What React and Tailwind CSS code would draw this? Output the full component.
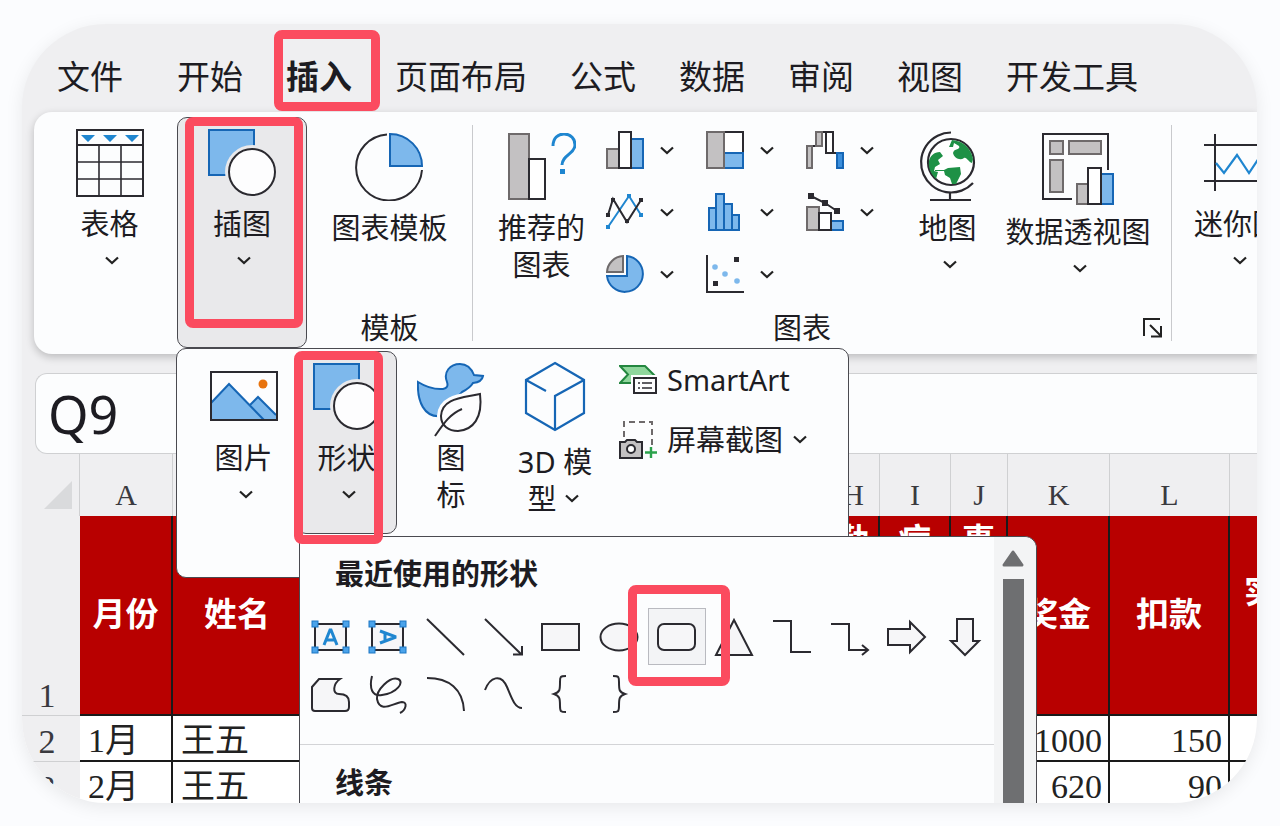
const RED_BOX =
  "pointer-events-none absolute z-10 rounded-lg border-[9px] border-[#fb4b5f]";
const DARK = "#2b2a30";
const BLUE = "#7db8ec";
const BLUE_LINE = "#1666b5";
const GRAY = "#c3c1c2";
const GRAY_LINE = "#6e6a6b";

const Chevron = () => (
  <svg width="14" height="9" viewBox="0 0 14 9" fill="none" stroke="#222" strokeWidth="2.2">
    <path d="M1 1.5L7 7L13 1.5" />
  </svg>
);

const TableIcon = () => (
  <svg width="68" height="68" viewBox="0 0 68 68" fill="none" stroke={DARK} strokeWidth="1.6">
    <rect x="1" y="1" width="66" height="66" strokeWidth="2" />
    <path d="M1 16H67" strokeWidth="2" />
    <path d="M1 33H67M1 50H67M23 16V67M45 16V67" />
    <path d="M5 6H19L12 13ZM27 6H41L34 13ZM49 6H63L56 13Z" fill="#1f86d0" stroke="none" />
  </svg>
);

const ShapesIcon = () => (
  <svg width="68" height="68" viewBox="0 0 68 68">
    <rect x="1" y="1" width="45" height="45" fill={BLUE} stroke={BLUE_LINE} strokeWidth="2" />
    <circle cx="44" cy="43" r="27" fill="#e9e9eb" />
    <circle cx="44" cy="43" r="23" fill="#fdfdfe" stroke={DARK} strokeWidth="2" />
  </svg>
);

const PieTemplateIcon = () => (
  <svg width="68" height="68" viewBox="0 0 68 68" fill="none">
    <path d="M32 1.5A33 33 0 1 0 67 37" stroke={DARK} strokeWidth="2" />
    <path d="M35 1A32 32 0 0 1 67 33H35Z" fill={BLUE} stroke={BLUE_LINE} strokeWidth="2" />
  </svg>
);

const RecommendIcon = () => (
  <svg width="68" height="68" viewBox="0 0 68 68" fill="none" strokeWidth="2">
    <rect x="1" y="1" width="20" height="65" fill={GRAY} stroke={GRAY_LINE} />
    <rect x="21" y="26" width="16" height="40" fill="#fff" stroke={DARK} />
    <path d="M45 13C45 5 50 1 56 1C63 1 67 6 67 12C67 21 54 22 54 32" stroke="#1f86d0" strokeWidth="3" />
    <rect x="52" y="36" width="5" height="5" fill="#1f86d0" />
  </svg>
);

const GlobeIcon = () => (
  <svg width="60" height="68" viewBox="0 2 60 68" className="overflow-visible" fill="none" stroke={DARK} strokeWidth="2.2">
    <path d="M33 1.5A30 30 0 1 0 55 52M32 61V69M12 69H53" />
    <circle cx="33" cy="31" r="23" fill="#fff" />
    <g fill="#1e9146" stroke="none">
      <path d="M11 30C12 25 16 21 22 21L25 25L20 29L22 33L17 36L16 40L20 41L18 48C13 43 10 37 11 30Z" />
      <path d="M34 9C45 10 53 17 55 28L54 32C50 31 49 26 46 27C42 30 36 27 35 22C36 17 43 19 41 15L36 12L35 16H31Z" />
      <path d="M30 37L42 36L43 43L38 53L34 53L32 47L27 44L26 40L17 40V39L26 39Z" />
    </g>
  </svg>
);

const PivotChartIcon = () => (
  <svg width="72" height="72" viewBox="0 0 72 72" fill="none" stroke={DARK} strokeWidth="2">
    <path d="M30 66H1V1H66V37" />
    <g fill={GRAY} stroke={GRAY_LINE}>
      <rect x="8" y="8" width="13" height="13" />
      <rect x="27" y="8" width="32" height="13" />
      <rect x="8" y="27" width="13" height="32" />
      <rect x="35" y="51" width="11" height="20" />
    </g>
    <rect x="59" y="41" width="12" height="30" fill={BLUE} stroke={BLUE_LINE} />
    <rect x="46" y="35" width="13" height="36" fill="#fff" />
  </svg>
);

const SparklineIcon = () => (
  <svg width="68" height="68" viewBox="0 -5 68 68" fill="none" stroke={DARK} strokeWidth="2">
    <path d="M11 0V57M58 0V57M0 11H68M0 47H68" />
    <path d="M12 29L20 39L33 21L45 39L57 21" stroke="#1f86d0" strokeWidth="2.2" />
  </svg>
);

const PictureIcon = () => (
  <svg width="68" height="68" viewBox="0 0 68 68" strokeWidth="2">
    <rect x="1" y="9" width="66" height="48" fill="#fdfdfe" />
    <path d="M1 57V40L19 21L40 42L48 34L66 52V57Z" fill={BLUE} />
    <path d="M1 40L19 21L54 57M40 42L48 34L66 52" fill="none" stroke={BLUE_LINE} />
    <rect x="1" y="9" width="66" height="48" fill="none" stroke={DARK} />
    <circle cx="53" cy="21" r="4.5" fill="#e8730e" />
  </svg>
);

const DuckLeafIcon = () => (
  <svg width="68" height="74" viewBox="0 0 68 74" fill="none" strokeWidth="2">
    <path
      d="M1 19Q14 27 26 26Q32 25 30 19C26 9 33 1 43 1C51 1 55 7 57 12L66 13Q65 19 56 20Q53 25 45 29L24 53C7 55 0 38 1 19Z"
      fill={BLUE}
      stroke={BLUE_LINE}
    />
    <path d="M63 31C45 35 25 35 24 53C24 63 32 68 41 68C56 67 66 55 63 31Z" fill="#fdfdfe" stroke="#fdfdfe" strokeWidth="8" />
    <path d="M63 31C45 35 25 35 24 53C24 63 32 68 41 68C56 67 66 55 63 31Z" fill="#fdfdfe" stroke={DARK} />
    <path d="M45 46C33 51 27 60 18 73" stroke={DARK} />
  </svg>
);

const CubeIcon = () => (
  <svg width="60" height="72" viewBox="0 1 60 72" className="overflow-visible" fill="none" stroke={BLUE_LINE} strokeWidth="2.2">
    <path d="M30 1L59 18V51L30 68L1 51V18Z" />
    <path d="M1 18L21 29M59 18L30 34V68" />
  </svg>
);

const SmartArtIcon = () => (
  <svg width="38" height="38" viewBox="0 -5 38 38" fill="none" strokeWidth="2">
    <path d="M1 1H26L36 11V18H1L9 9.500Z" fill="#8fd69c" stroke="#23863f" />
    <rect x="12" y="10" width="28" height="20" fill="#fdfdfe" />
    <rect x="15" y="13" width="22" height="15" fill="#fdfdfe" stroke={DARK} />
    <path d="M19 18H21M19 23H21M23 18H33M23 23H33" stroke={DARK} strokeWidth="1.6" />
  </svg>
);

const ScreenshotIcon = () => (
  <svg width="38" height="38" viewBox="0 -1 38 38" className="overflow-visible" fill="none" strokeWidth="2">
    <path d="M5 16V1H33V25" stroke={GRAY_LINE} strokeDasharray="6 4" />
    <path d="M1 21H6L8 19H16L18 21H23V37H1Z" fill={GRAY} stroke={DARK} />
    <circle cx="12" cy="28" r="4" fill="#fff" stroke={DARK} />
    <path d="M32 26V37M26 31.500H38" stroke="#2ba24c" strokeWidth="2.4" />
  </svg>
);

const CHARTS = [
  {
    name: "柱形图",
    art: (
      <>
        <rect x="1" y="18" width="12" height="19" fill={GRAY} stroke={GRAY_LINE} />
        <rect x="25" y="8" width="12" height="29" fill={BLUE} stroke={BLUE_LINE} />
        <rect x="13" y="1" width="12" height="36" fill="#fff" stroke={DARK} />
      </>
    ),
  },
  {
    name: "层次结构图",
    art: (
      <>
        <rect x="18" y="1" width="19" height="21" fill="#fff" stroke={DARK} />
        <rect x="18" y="22" width="19" height="15" fill={BLUE} stroke={BLUE_LINE} />
        <rect x="1" y="1" width="17" height="36" fill={GRAY} stroke={GRAY_LINE} />
      </>
    ),
  },
  {
    name: "瀑布图",
    art: (
      <>
        <path d="M6 15H10M16 1H19M27 22H31" stroke={DARK} />
        <rect x="1" y="15" width="5" height="22" fill={GRAY} stroke={GRAY_LINE} />
        <rect x="10" y="1" width="6" height="14" fill={GRAY} stroke={GRAY_LINE} />
        <rect x="20" y="1" width="7" height="21" fill="#fff" stroke={DARK} />
        <rect x="31" y="22" width="6" height="15" fill="#3c8fdc" stroke={BLUE_LINE} />
      </>
    ),
  },
  {
    name: "折线图",
    art: (
      <>
        <path d="M2 34L23 3L35 22" stroke="#1f86d0" />
        <path d="M2 22L7 6L21 29L35 7" stroke={DARK} />
        <path d="M0 32h4v4H0zM21 1h4v4h-4zM33 20h4v4h-4z" fill="#1f86d0" stroke="none" />
        <path d="M0 20h4v4H0zM5 5h4v4H5zM19 26h4v4h-4zM33 5h4v4h-4z" fill={DARK} stroke="none" />
      </>
    ),
  },
  {
    name: "统计图",
    art: (
      <g fill={BLUE} stroke={BLUE_LINE}>
        <rect x="3" y="15" width="7" height="22" />
        <rect x="18" y="11" width="8" height="26" />
        <rect x="26" y="22" width="7" height="15" />
        <rect x="10" y="1" width="8" height="36" />
      </g>
    ),
  },
  {
    name: "组合图",
    art: (
      <>
        <path d="M5 3L19 10L31 18" stroke={DARK} />
        <path d="M2 0h6v6H2zM16 7h6v6h-6zM28 15h6v6h-6z" fill={DARK} stroke="none" />
        <rect x="1" y="14" width="12" height="23" fill={GRAY} stroke={GRAY_LINE} />
        <rect x="25" y="28" width="12" height="9" fill={BLUE} stroke={BLUE_LINE} />
        <rect x="13" y="20" width="12" height="17" fill="#fff" stroke={DARK} />
      </>
    ),
  },
  {
    name: "饼图",
    art: (
      <>
        <path d="M21 1A18 18 0 1 1 1 21H21Z" fill={BLUE} stroke={BLUE_LINE} />
        <path d="M17 1A17 17 0 0 0 1 17H17Z" fill={GRAY} stroke={GRAY_LINE} />
      </>
    ),
  },
  {
    name: "散点图",
    art: (
      <>
        <path d="M1 0V37H38" stroke={DARK} />
        <path d="M28 2h5v5h-5zM7 26h5v5H7z" fill={DARK} stroke="none" />
        <g fill={BLUE} stroke="none">
          <circle cx="9" cy="12" r="2.800" />
          <circle cx="19" cy="19" r="2.800" />
          <circle cx="31" cy="26" r="2.800" />
        </g>
      </>
    ),
  },
];

const CORNERS = (
  <g fill="#4ba3ea" stroke="#1b76c4" strokeWidth="1">
    <rect x="1" y="4" width="6" height="6" />
    <rect x="32" y="4" width="6" height="6" />
    <rect x="1" y="30" width="6" height="6" />
    <rect x="32" y="30" width="6" height="6" />
  </g>
);

const SHAPES = [
  {
    name: "文本框",
    art: (
      <>
        <rect x="4" y="7" width="31" height="26" />
        {CORNERS}
        <path d="M13 28L19 13H20L26 28M15.500 23H23.500" stroke="#1f86d0" strokeWidth="3" />
      </>
    ),
  },
  {
    name: "竖排文本框",
    art: (
      <>
        <rect x="4" y="7" width="31" height="26" />
        {CORNERS}
        <path d="M12 14L27 19.500V20.500L12 26M17 16V24" stroke="#1f86d0" strokeWidth="3" />
      </>
    ),
  },
  { name: "直线", art: <path d="M1 2L38 38" /> },
  { name: "箭头", art: <path d="M1 2L37 37M29 37.500H38V29" /> },
  { name: "矩形", art: <rect x="1" y="7" width="37" height="26" /> },
  { name: "椭圆", art: <ellipse cx="20" cy="20" rx="18.500" ry="13.500" /> },
  { name: "圆角矩形", selected: true, art: <rect x="1" y="7" width="37" height="26" rx="6" /> },
  { name: "三角形", art: <path d="M20 3L38 38H2Z" /> },
  { name: "肘形连接符", art: <path d="M1 4H19V35H39" fill="none" /> },
  { name: "肘形箭头", art: <path d="M1 7H19V33H37M32 28L38 33L32 38" fill="none" /> },
  { name: "右箭头", art: <path d="M1 12H23V5L38 20L23 35V28H1Z" /> },
  { name: "下箭头", art: <path d="M12 2H28V24H34L20 38L6 24H12Z" /> },
  {
    name: "任意多边形",
    art: <path d="M8 5H29C22 10 21 20 28 20C35 20 38 23 38 28V33Q38 37 34 37H4Q1 37 1 34V13Z" />,
  },
  {
    name: "自由曲线",
    art: <path d="M4 2C1 14 4 23 14 21C29 19 37 8 30 5C22 2 8 16 9 25C12 40 25 29 34 28C40 28 38 36 32 39" fill="none" />,
  },
  { name: "弧形", art: <path d="M1 4C23 4 37 15 38 37" fill="none" /> },
  { name: "曲线", art: <path d="M1 16C6 3 17 -1 23 13C28 25 31 34 38 34" fill="none" /> },
  { name: "左大括号", art: <path d="M25 2C19 2 19 3 19 8C19 16 19 18 13 20C19 22 19 25 19 32C19 38 20 38 25 38" fill="none" /> },
  { name: "右大括号", art: <path d="M14 2C20 2 20 3 20 8C20 16 20 18 26 20C20 22 20 25 20 32C20 38 19 38 14 38" fill="none" /> },
];

const TABS = ["文件", "开始", "插入", "页面布局", "公式", "数据", "审阅", "视图", "开发工具"];

const BigButton = ({ icon, label, arrow = false, className = "" }) => (
  <button type="button" className={`flex flex-col items-center ${className}`}>
    {icon}
    <span className="mt-2 whitespace-nowrap">{label}</span>
    {arrow && (
      <span className="flex h-[37px] items-center pl-1">
        <Chevron />
      </span>
    )}
  </button>
);

const ShapesMenu = () => (
  <div className="absolute top-full left-[3px] z-20 mt-px flex h-[300px] w-[738px] rounded-tr-xl border border-[#4a4a50] bg-[#fcfdfe]">
    <div className="flex-1">
      <h2 className="mt-[18px] pl-[35px] font-bold">最近使用的形状</h2>
      <div className="mt-4 ml-0.5 grid grid-cols-12">
        {SHAPES.map((shape) => (
          <button
            key={shape.name}
            type="button"
            aria-label={shape.name}
            className={
              shape.selected
                ? "relative flex h-[57px] items-center justify-center border border-[#b9bac0] bg-[#f3f4f6]"
                : "flex h-[57px] items-center justify-center"
            }
          >
            <svg width="40" height="40" viewBox="0 0 40 40" fill="#f6f6f8" stroke={DARK} strokeWidth="2">
              {shape.art}
            </svg>
            {shape.selected && <span className={`${RED_BOX} -top-6 -right-[25px] -bottom-[22px] -left-[21px]`} />}
          </button>
        ))}
      </div>
      <hr className="mt-[22px] border-[#d3d4d7]" />
      <h2 className="mt-[19px] pl-[35px] font-bold">线条</h2>
    </div>
    <div className="flex w-[42px] flex-col items-center rounded-tr-xl bg-[#f3f4f5] pt-3 pr-1">
      <svg width="22" height="18" viewBox="0 0 22 18">
        <path d="M11 3L20 16H2Z" fill="#6e6f71" stroke="#6e6f71" strokeWidth="3" strokeLinejoin="round" />
      </svg>
      <div className="mt-3 w-[21px] flex-1 bg-[#6e6f71]" />
    </div>
  </div>
);

const IllustrationMenu = () => (
  <div className="absolute top-full -left-px z-20 flex h-[230px] w-[673px] items-start rounded-[10px] border border-[#4a4a50] bg-[#fcfdfe]">
    <BigButton icon={<PictureIcon />} label="图片" arrow className="ml-[14px] w-[105px] pt-[14px]" />
    <div className="relative mt-0.5 h-[184px] w-[101px]">
      <BigButton
        icon={<ShapesIcon />}
        label="形状"
        arrow
        className="h-[183px] w-full rounded-[10px] border border-[#4a4a50] bg-[#e9e9eb] pt-[11px]"
      />
      <span className={`${RED_BOX} top-0 right-[14px] -bottom-[9px] -left-0.5 z-30`} />
      <ShapesMenu />
    </div>
    <button type="button" className="flex w-[108px] flex-col items-center pt-[14px]">
      <span className="h-17">
        <DuckLeafIcon />
      </span>
      <span className="mt-2">
        图
        <br />标
      </span>
    </button>
    <button type="button" className="flex w-[100px] flex-col items-center pt-[14px]">
      <CubeIcon />
      <span className="mt-2 whitespace-nowrap">3D 模</span>
      <span className="flex items-center gap-2 pr-1">
        型
        <Chevron />
      </span>
    </button>
    <div className="ml-[14px] flex flex-col">
      <button type="button" className="flex h-15 items-center gap-[10px]">
        <SmartArtIcon />
        SmartArt
      </button>
      <button type="button" className="flex h-15 items-center gap-[10px]">
        <ScreenshotIcon />
        屏幕截图
        <Chevron />
      </button>
    </div>
  </div>
);

const Ribbon = () => (
  <div className="relative z-10 ml-3 flex h-[242px] rounded-l-[18px] bg-[#fcfdfe] text-[29px] leading-[37px] shadow-[0_3px_8px_rgba(0,0,0,0.22)]">
    <BigButton icon={<TableIcon />} label="表格" arrow className="ml-2 w-[135px] shrink-0 pt-[17px]" />

    <div className="relative mt-[5px] h-[231px] w-[130px] shrink-0">
      <BigButton
        icon={<ShapesIcon />}
        label="插图"
        arrow
        className="h-full w-full rounded-[10px] border border-[#4a4a50] bg-[#e9e9eb] pt-[11px]"
      />
      <span className={`${RED_BOX} top-0 right-1 bottom-5 left-2`} />
      <IllustrationMenu />
    </div>

    <div className="flex w-[165px] shrink-0 flex-col items-center justify-between pt-[21px] pb-2">
      <BigButton icon={<PieTemplateIcon />} label="图表模板" />
      <span>模板</span>
    </div>

    <div className="my-[13px] w-px shrink-0 bg-[#c9cacd]" />

    <div className="flex w-[698px] shrink-0 flex-col justify-between pt-[19px] pb-2">
      <div className="flex items-start">
        <button type="button" className="flex w-[133px] flex-col items-center pt-0.5 pl-1">
          <RecommendIcon />
          <span className="mt-2">
            推荐的
            <br />
            图表
          </span>
        </button>
        <div className="grid w-[300px] grid-cols-3 gap-y-6">
          {CHARTS.map((chart) => (
            <button key={chart.name} type="button" aria-label={chart.name} className="flex items-center gap-4">
              <svg width="38" height="38" viewBox="0 0 38 38" fill="none" strokeWidth="2">
                {chart.art}
              </svg>
              <Chevron />
            </button>
          ))}
        </div>
        <BigButton icon={<GlobeIcon />} label="地图" arrow className="w-[83px] pt-0.5" />
        <BigButton icon={<PivotChartIcon />} label="数据透视图" arrow className="w-[178px] pt-0.5" />
      </div>
      <div className="flex items-center justify-end gap-78 pr-2">
        <span>图表</span>
        <button type="button" aria-label="图表设置">
          <svg width="20" height="20" viewBox="0 0 20 20" fill="none" stroke="#222" strokeWidth="2">
            <path d="M1 18V1H17M7 7L18 18M18 8V18.500H8" />
          </svg>
        </button>
      </div>
    </div>

    <div className="my-[13px] w-px shrink-0 bg-[#c9cacd]" />

    <BigButton icon={<SparklineIcon />} label="迷你图" arrow className="ml-[22px] shrink-0 pt-[17px]" />
  </div>
);

const COLUMN_HEAD = "border-r border-[#cfd0d2] pt-5 text-center font-normal";
const FIELD = "border-r-2 border-b-2 border-[#1a1a1a]";
const TITLE = `${FIELD} pb-1.5 text-center`;
const ROW_HEAD = "border-b border-[#cfd0d2] bg-[#efeff1] pt-1.5 pr-2 text-center font-normal text-[#3a3a3f]";

const Sheet = () => (
  <table className="w-[1335px] table-fixed border-separate border-spacing-0 bg-white font-['Liberation_Serif','Noto_Sans_CJK_SC',serif] text-[34px] leading-[38px] text-[#222]">
    <colgroup>
      <col className="w-[58px]" />
      <col className="w-[93px]" />
      <col className="w-[130px]" />
      <col className="w-[524px]" />
      <col className="w-[53px]" />
      <col className="w-[71px]" />
      <col className="w-[57px]" />
      <col className="w-[102px]" />
      <col className="w-[120px]" />
      <col className="w-[127px]" />
    </colgroup>
    <thead>
      <tr className="h-[62px] bg-[#efeff1] text-[30px] text-[#3a3a3f]">
        <th className="border-r border-[#cfd0d2] pt-5 pr-[7px]">
          <svg width="28" height="28" viewBox="0 0 28 28" className="ml-auto">
            <path d="M28 0V28H0Z" fill="#d9dadc" />
          </svg>
        </th>
        <th className={COLUMN_HEAD}>A</th>
        <th className={COLUMN_HEAD} />
        <th className={COLUMN_HEAD} />
        <th className={COLUMN_HEAD}>H</th>
        <th className={COLUMN_HEAD}>I</th>
        <th className={COLUMN_HEAD}>J</th>
        <th className={COLUMN_HEAD}>K</th>
        <th className={COLUMN_HEAD}>L</th>
        <th className={COLUMN_HEAD} />
      </tr>
    </thead>
    <tbody>
      <tr className="h-[200px] bg-[#b80000] font-['Noto_Sans_CJK_SC',sans-serif] text-[33px] leading-[44px] font-bold text-white">
        <th className="border-b border-[#cfd0d2] bg-[#efeff1] pr-2 text-center align-bottom font-['Liberation_Serif',serif] text-[34px] leading-[38px] font-normal text-[#3a3a3f]">
          1
        </th>
        <td className={TITLE}>月份</td>
        <td className={TITLE}>姓名</td>
        <td className={FIELD} />
        <td className={`${TITLE} align-top`}>勤</td>
        <td className={`${TITLE} align-top`}>病</td>
        <td className={`${TITLE} align-top`}>事</td>
        <td className={TITLE}>奖金</td>
        <td className={TITLE}>扣款</td>
        <td className={`${FIELD} pb-13 pl-[14px]`}>实发</td>
      </tr>
      {[
        [2, "1月", "王五", 1000, 150],
        [3, "2月", "王五", 620, 90],
      ].map(([row, month, name, bonus, deduction]) => (
        <tr key={row} className="h-[46px]">
          <th className={ROW_HEAD}>{row}</th>
          <td className={`${FIELD} pt-1.5 pl-2`}>{month}</td>
          <td className={`${FIELD} pt-1.5 pl-2`}>{name}</td>
          <td className={FIELD} />
          <td className={FIELD} />
          <td className={FIELD} />
          <td className={FIELD} />
          <td className={`${FIELD} pt-1.5 pr-1.5 text-right`}>{bonus}</td>
          <td className={`${FIELD} pt-1.5 pr-1.5 text-right`}>{deduction}</td>
          <td className={FIELD} />
        </tr>
      ))}
    </tbody>
  </table>
);

const App = () => {
  return (
    <div className="flex h-screen flex-col bg-[#fbfcfe] pt-6 pr-[23px] pb-[23px] pl-[22px] font-['Noto_Sans','Noto_Sans_CJK_SC',sans-serif] text-[#1d1c22]">
      <main className="min-h-0 flex-1 overflow-hidden rounded-[84px] bg-[#efeff1] shadow-[0_4px_18px_rgba(0,0,0,0.08)]">
        <nav className="flex h-22 items-center gap-[43px] pt-[18px] pl-[35px] text-[33px] leading-[44px] whitespace-nowrap">
          {TABS.map((tab) =>
            tab === "插入" ? (
              <button key={tab} type="button" className="relative z-20 font-bold">
                {tab}
                <span className={`${RED_BOX} -top-[25px] -right-7 -bottom-3 -left-3`} />
              </button>
            ) : (
              <button key={tab} type="button" className="first:mr-[11px]">
                {tab}
              </button>
            ),
          )}
        </nav>

        <Ribbon />

        <div className="mt-[19px] ml-[13px] flex h-[81px] rounded-l-xl border border-r-0 border-[#cfd0d2] bg-[#fcfdfe]">
          <input aria-label="名称框" defaultValue="Q9" className="w-[140px] pl-3 text-[52px] leading-[60px]" />
          <input aria-label="编辑栏" className="min-w-0 flex-1 text-[29px]" />
        </div>

        <Sheet />
      </main>
    </div>
  );
};

export default App;
